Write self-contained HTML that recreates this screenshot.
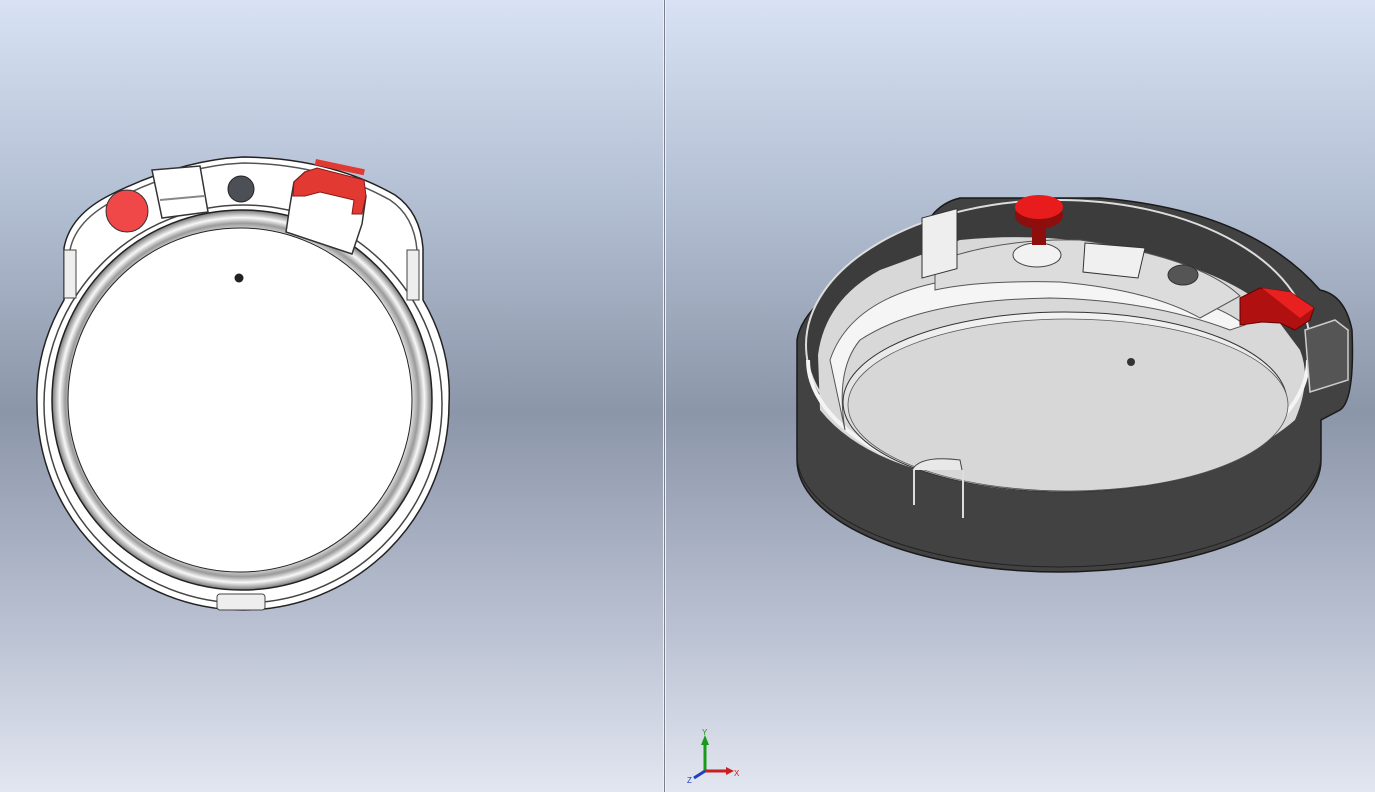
<!DOCTYPE html>
<html><head><style>
html,body{margin:0;padding:0;width:1375px;height:792px;overflow:hidden}
body{background:linear-gradient(to bottom,#d8e2f4 0%,#b3bfd3 25%,#8c96a9 52%,#b7bfd0 78%,#e2e6f0 100%);font-family:"Liberation Sans",sans-serif}
svg{position:absolute;left:0;top:0}
</style></head><body>
<svg width="1375" height="792" viewBox="0 0 1375 792">
<defs>
<radialGradient id="ring" cx="50%" cy="50%" r="50%">
<stop offset="88%" stop-color="#ffffff"/><stop offset="93%" stop-color="#9a9a9a"/><stop offset="96%" stop-color="#f8f8f8"/><stop offset="100%" stop-color="#777"/>
</radialGradient>
<linearGradient id="floor" x1="0" y1="0" x2="0" y2="1"><stop offset="0" stop-color="#f2f2f2"/><stop offset="1" stop-color="#d0d0d0"/></linearGradient>
</defs>
<rect x="663" y="0" width="3" height="792" fill="#eef0f4"/>
<line x1="664.5" y1="0" x2="664.5" y2="792" stroke="#7a7f88" stroke-width="1"/>

<!-- LEFT VIEW -->
<path d="M64,248 Q70,215 110,195 Q180,160 243,157 Q330,158 395,195 Q420,212 423,248 L423,300 Q452,350 449,404 A206,206 0 0 1 37,404 Q35,350 64,300 Z" fill="#fff" stroke="#222" stroke-width="1.5"/>
<path d="M70,250 Q76,220 115,200 Q180,166 243,163 Q325,164 390,200 Q414,216 417,250" fill="none" stroke="#555" stroke-width="1.5"/>
<circle cx="243" cy="404" r="199" fill="none" stroke="#444" stroke-width="1.5"/>
<circle cx="242" cy="400" r="190" fill="url(#ring)" stroke="#222" stroke-width="1.5"/>
<circle cx="240" cy="400" r="172" fill="#fff" stroke="#222" stroke-width="1"/>
<circle cx="239" cy="278" r="4.5" fill="#222"/>
<circle cx="127" cy="211" r="21" fill="#f04848" stroke="#333" stroke-width="1"/>
<path d="M152,170 L200,166 L208,212 L162,218 Z" fill="#fff" stroke="#333" stroke-width="1.5"/>
<path d="M160,200 L204,196" stroke="#888" stroke-width="2"/>
<circle cx="241" cy="189" r="13" fill="#4c5056" stroke="#222"/>
<path d="M290,205 L294,182 L305,172 L358,178 L366,196 L362,224 L352,254 L286,232 Z" fill="#fff" stroke="#333" stroke-width="1.5"/>
<path d="M294,182 L305,172 L317,168 L364,180 L366,196 L362,214 L352,214 L354,200 L320,192 L305,196 L293,196 Z" fill="#e23a32" stroke="#8a1a16" stroke-width="1"/>
<rect x="316" y="159" width="50" height="6" fill="#e23a32" transform="rotate(12 316 159)"/>
<rect x="64" y="250" width="12" height="48" fill="#eee" stroke="#444"/>
<rect x="407" y="250" width="12" height="50" fill="#eee" stroke="#444"/>
<rect x="217" y="594" width="48" height="16" rx="3" fill="#eee" stroke="#444"/>

<!-- RIGHT VIEW -->
<path d="M797,340 L797,460 A262,112 0 0 0 1321,460 L1321,420 L1340,410 Q1355,400 1352,330 Q1345,295 1320,290 Q1250,210 1100,198 L960,198 Q930,205 920,240 Q860,265 822,300 Q800,320 797,340 Z" fill="#424242" stroke="#1a1a1a" stroke-width="1.5"/>
<path d="M797,455 A262,112 0 0 0 1321,455" fill="none" stroke="#222" stroke-width="1"/>
<ellipse cx="1058" cy="345" rx="252" ry="145" fill="#3c3c3c" stroke="#ddd" stroke-width="2"/>
<path d="M818,355 Q825,300 880,270 Q935,250 960,240 Q1060,230 1150,255 Q1230,275 1270,310 L1300,350 Q1312,380 1295,420 Q1220,485 1058,488 Q880,485 820,410 Z" fill="#d8d8d8"/>
<path d="M808,360 A250,130 0 0 0 1308,360" fill="none" stroke="#f4f4f4" stroke-width="4"/>
<path d="M830,360 Q850,300 940,282 Q1050,268 1160,290 Q1220,305 1245,325 L1230,330 Q1150,300 1050,298 Q920,300 860,340 Q835,370 845,430 Z" fill="#f5f5f5" stroke="#555" stroke-width="1"/>
<ellipse cx="1065" cy="402" rx="222" ry="90" fill="url(#floor)" stroke="#333" stroke-width="1"/>
<ellipse cx="1068" cy="405" rx="220" ry="86" fill="#d7d7d7" stroke="#555" stroke-width="0.8"/>
<path d="M935,262 Q1000,238 1080,240 Q1200,258 1240,296 L1200,318 Q1150,290 1060,282 Q980,280 935,290 Z" fill="#dcdcdc" stroke="#555" stroke-width="1"/>
<ellipse cx="1037" cy="255" rx="24" ry="12" fill="#f2f2f2" stroke="#444"/>
<path d="M1085,243 L1145,248 L1138,278 L1083,272 Z" fill="#f0f0f0" stroke="#333"/>
<ellipse cx="1183" cy="275" rx="15" ry="10" fill="#555" stroke="#333"/>
<circle cx="1131" cy="362" r="4" fill="#333"/>
<rect x="1032" y="225" width="14" height="20" fill="#8e0d0d"/>
<ellipse cx="1039" cy="215" rx="24" ry="14" fill="#8e0d0d"/>
<ellipse cx="1039" cy="207" rx="24" ry="12" fill="#e81c1c"/>
<path d="M1240,298 L1260,288 L1290,292 L1314,308 L1310,320 L1295,330 L1280,323 L1262,322 L1240,325 Z" fill="#b01010" stroke="#600"/>
<path d="M1262,288 L1290,292 L1314,308 L1300,318 Z" fill="#e82020"/>
<rect x="922" y="215" width="35" height="60" fill="#eee" stroke="#333" transform="skewY(-15) translate(0,250)"/>
<path d="M912,470 Q920,455 960,460 L962,470" fill="#e8e8e8" stroke="#444"/>
<line x1="914" y1="470" x2="914" y2="505" stroke="#ddd" stroke-width="2"/>
<line x1="963" y1="470" x2="963" y2="518" stroke="#ddd" stroke-width="2"/>
<path d="M1305,330 L1335,320 L1348,330 L1348,380 L1310,392 Z" fill="#555" stroke="#ccc" stroke-width="1.5"/>

<line x1="705" y1="771" x2="705" y2="740" stroke="#1a9a1a" stroke-width="3"/>
<polygon points="701,745 709,745 705,735" fill="#1a9a1a"/>
<line x1="705" y1="771" x2="728" y2="771" stroke="#c82020" stroke-width="3"/>
<polygon points="726,767 726,775 734,771" fill="#c82020"/>
<line x1="705" y1="771" x2="694" y2="778" stroke="#2040c0" stroke-width="3"/>
<text x="702" y="735" font-size="8" fill="#1a9a1a">Y</text>
<text x="734" y="776" font-size="8" fill="#c82020">X</text>
<text x="687" y="783" font-size="8" fill="#2040c0">Z</text>
</svg>
</body></html>
